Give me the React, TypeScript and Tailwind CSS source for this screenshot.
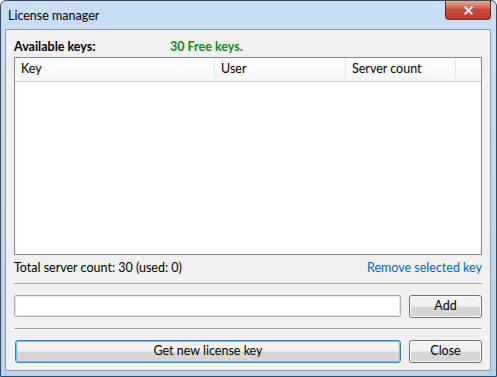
import { X } from "lucide-react"

const font = { fontFamily: 'Lato, "Noto Sans", sans-serif' }

function Button({ label, focused }: { label: string; focused?: boolean }) {
  return (
    <button
      className={
        "h-[23px] rounded-[3px] border text-[12.5px] text-black bg-gradient-to-b from-[#f2f2f2] from-45% to-[#d5d5d5] to-55% " +
        (focused
          ? "border-[#3c7fb1] shadow-[inset_0_0_0_1px_#48d0ff]"
          : "border-[#707070] shadow-[inset_0_0_0_1px_#fcfcfc]")
      }
    >
      {label}
    </button>
  )
}

export default function App() {
  return (
    <div
      style={font}
      className="w-[497px] h-[377px] bg-gradient-to-b from-[#c9def3] to-[#b9d1ea] border border-[#3b4a5a] rounded-t-[6px] flex flex-col overflow-hidden"
    >
      <div className="h-[28px] flex items-start justify-between pl-[7px]">
        <span className="text-[12.5px] text-black mt-[6px]">License manager</span>
        <div className="w-[46px] h-[19px] mr-[5px] rounded-b-[4px] border border-t-0 border-[#6b2a25] bg-gradient-to-b from-[#e8a89b] from-0% via-[#c9493a] via-50% to-[#c33a26] flex items-center justify-center">
          <X size={13} strokeWidth={3.5} className="text-white" />
        </div>
      </div>

      <div className="flex-1 ml-[4px] mr-[5px] mb-[5px] border border-[#8d9eb0] bg-[#f0f0f0] flex flex-col px-[8px] pt-[7px] text-[12.5px] text-black">
        <div className="flex h-[20px] items-center font-bold">
          <span className="w-[156px]">Available keys:</span>
          <span className="text-[#0a8a12]">30 Free keys.</span>
        </div>

        <div className="h-[198px] border border-[#828790] bg-white flex flex-col">
          <div className="h-[24px] flex border-b border-[#d5d5d5] bg-gradient-to-b from-white to-[#f3f4f6]">
            <div className="w-[200px] border-r border-[#e3e5e8] pl-[6px] flex items-center">Key</div>
            <div className="w-[131px] border-r border-[#e3e5e8] pl-[6px] flex items-center">User</div>
            <div className="w-[110px] border-r border-[#e3e5e8] pl-[6px] flex items-center">Server count</div>
            <div className="flex-1" />
          </div>
        </div>

        <div className="flex justify-between items-center h-[27px]">
          <span>Total server count: 30 (used: 0)</span>
          <span className="text-[#0066cc]">Remove selected key</span>
        </div>

        <div className="h-px bg-[#a0a0a0] border-b border-white box-content mt-[1px]" />

        <div className="flex gap-[8px] mt-[10px]">
          <input className="flex-1 h-[22px] border border-[#abadb3] bg-white rounded-[2px] shadow-[inset_0_0_0_1px_#e3e9ef] outline-none" />
          <div className="w-[73px] flex flex-col">
            <Button label="Add" />
          </div>
        </div>

        <div className="h-px bg-[#a0a0a0] border-b border-white box-content mt-[10px]" />

        <div className="flex gap-[8px] mt-[10px] pl-px">
          <div className="flex-1 flex flex-col">
            <Button label="Get new license key" focused />
          </div>
          <div className="w-[73px] flex flex-col">
            <Button label="Close" />
          </div>
        </div>
      </div>
    </div>
  )
}
